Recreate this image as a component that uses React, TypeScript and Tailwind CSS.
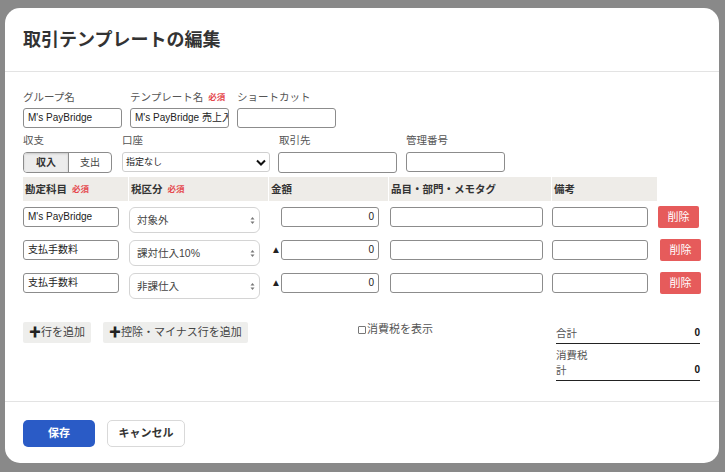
const rows = [
  { account: "M's PayBridge", tax: '対象外', minus: false },
  { account: '支払手数料', tax: '課対仕入10%', minus: true },
  { account: '支払手数料', tax: '非課仕入', minus: true },
]

function Required() {
  return <span className="ml-[5px] text-[8.5px] font-bold text-[#e5484d]">必須</span>
}

function Input({ value = '', className = '' }: { value?: string; className?: string }) {
  return (
    <div
      className={`flex items-center h-[20px] border border-[#8c8c8c] rounded-[3px] bg-white px-[4px] text-[10px] text-[#222] overflow-hidden whitespace-nowrap ${className}`}
    >
      {value}
    </div>
  )
}

function UpDown() {
  return (
    <svg width="5" height="9" viewBox="0 0 5 9" className="text-[#777]">
      <path d="M0.5 3.5 L2.5 1 L4.5 3.5 Z" fill="currentColor" />
      <path d="M0.5 5.5 L2.5 8 L4.5 5.5 Z" fill="currentColor" />
    </svg>
  )
}

export default function App() {
  return (
    <div className="w-[725px] h-[472px] bg-[#898989] pt-[8px] pl-[5px] font-['Liberation_Sans','Noto_Sans_CJK_JP',sans-serif] leading-none overflow-hidden">
      <div className="w-[714px] h-[455px] bg-white rounded-[15px] flex flex-col">
        <div className="h-[64px] border-b border-[#e3e3e3] flex items-center px-[18px]">
          <h1 className="text-[18px] font-bold text-[#333]">取引テンプレートの編集</h1>
        </div>

        <div className="flex-1 px-[18px] pt-[18px] text-[#555]">
          {/* row A */}
          <div className="flex text-[10.5px] h-[14px] items-center">
            <div className="w-[107px]">グループ名</div>
            <div className="w-[107px] flex items-center">
              テンプレート名<Required />
            </div>
            <div>ショートカット</div>
          </div>
          <div className="flex mt-[4px] gap-[8px]">
            <Input value="M's PayBridge" className="w-[99px]" />
            <Input value="M's PayBridge 売上入金" className="w-[99px]" />
            <Input className="w-[99px]" />
          </div>

          {/* row B */}
          <div className="flex text-[10.5px] h-[14px] items-center mt-[5px]">
            <div className="w-[99px]">収支</div>
            <div className="w-[157px]">口座</div>
            <div className="w-[127px]">取引先</div>
            <div>管理番号</div>
          </div>
          <div className="flex mt-[5px] items-start">
            <div className="flex w-[89px] h-[21px] border border-[#8c8c8c] rounded-[4px] overflow-hidden text-[10px]">
              <div className="w-[45px] flex items-center justify-center bg-[#ececec] font-bold text-[#333] border-r border-[#8c8c8c] shadow-[inset_0_1px_2px_rgba(0,0,0,0.15)]">
                収入
              </div>
              <div className="flex-1 flex items-center justify-center text-[#444]">支出</div>
            </div>
            <div className="ml-[10px] w-[148px] h-[20px] border border-[#cfcfcf] rounded-[3px] flex items-center justify-between px-[3px] text-[9px] text-[#222]">
              <span>指定なし</span>
              <svg width="10" height="7" viewBox="0 0 10 7">
                <path d="M1 1.5 L5 5.5 L9 1.5" stroke="#111" strokeWidth="2" fill="none" />
              </svg>
            </div>
            <Input className="ml-[8px] w-[119px] h-[21px]" />
            <Input className="ml-[9px] w-[99px]" />
          </div>

          {/* table header */}
          <div className="flex mt-[4px] h-[24px] text-[10.5px] font-bold text-[#333]">
            <div className="w-[106px] bg-[#eeece8] flex items-center px-[2px] border-r border-white">
              勘定科目<Required />
            </div>
            <div className="w-[140px] bg-[#eeece8] flex items-center px-[2px] border-r border-white">
              税区分<Required />
            </div>
            <div className="w-[120px] bg-[#eeece8] flex items-center px-[2px] border-r border-white">金額</div>
            <div className="w-[163px] bg-[#eeece8] flex items-center px-[2px] border-r border-white">
              品目・部門・メモタグ
            </div>
            <div className="w-[105px] bg-[#eeece8] flex items-center px-[2px]">備考</div>
          </div>

          {/* rows */}
          <div className="flex flex-col gap-[7px] mt-[6px]">
            {rows.map((r, i) => (
              <div key={i} className="flex items-start h-[26px]">
                <div className="w-[106px]">
                  <Input value={r.account} className="w-[96px]" />
                </div>
                <div className="w-[140px]">
                  <div className="w-[131px] h-[26px] border border-[#d4d4d4] rounded-[6px] flex items-center justify-between pl-[7px] pr-[4px] text-[10.5px] text-[#444]">
                    <span>{r.tax}</span>
                    <UpDown />
                  </div>
                </div>
                <div className="w-[120px] flex items-center">
                  <span className="w-[12px] pl-[2px] text-[10px] text-[#222]">{r.minus ? '▲' : ''}</span>
                  <Input value="0" className="w-[98px] justify-end" />
                </div>
                <div className="w-[163px] pl-[1px]">
                  <Input className="w-[153px]" />
                </div>
                <div className="w-[106px]">
                  <Input className="w-[96px]" />
                </div>
                <button className={`${i === 0 ? '' : 'ml-[2px]'} w-[41px] h-[22px] -mt-[1px] bg-[#e65b5b] rounded-[2px] text-white text-[11px]`}>
                  削除
                </button>
              </div>
            ))}
          </div>

          {/* bottom */}
          <div className="flex items-start mt-[23px]">
            <div className="flex gap-[12px] w-[335px]">
              <button className="h-[21px] px-[6px] bg-[#eeeeec] rounded-[2px] text-[11px] text-[#444] flex items-center">
                <span className="font-bold text-[#222] text-[12px]">✚</span>行を追加
              </button>
              <button className="h-[21px] px-[6px] bg-[#eeeeec] rounded-[2px] text-[11px] text-[#444] flex items-center">
                <span className="font-bold text-[#222] text-[12px]">✚</span>控除・マイナス行を追加
              </button>
            </div>
            <div className="w-[198px] flex items-center text-[11px] text-[#555] pt-[2px]">
              <span className="w-[8px] h-[8px] border border-[#777] rounded-[1px] mr-[1px]" />
              消費税を表示
            </div>
            <div className="w-[144px] text-[10.5px] text-[#555] pt-[4px]">
              <div className="flex justify-between items-center h-[14px]">
                <span>合計</span>
                <span className="font-bold text-[#111] text-[10px]">0</span>
              </div>
              <div className="border-b border-[#222] mt-[3px]" />
              <div className="h-[14px] flex items-center mt-[4px]">消費税</div>
              <div className="flex justify-between items-center h-[14px] mt-[1px]">
                <span>計</span>
                <span className="font-bold text-[#111] text-[10px]">0</span>
              </div>
              <div className="border-b border-[#222] mt-[3px]" />
            </div>
          </div>
        </div>

        <div className="h-[62px] border-t border-[#e3e3e3] flex items-start px-[18px] pt-[18px] gap-[12px]">
          <button className="w-[72px] h-[27px] bg-[#2a5bc6] rounded-[5px] text-white text-[11px] font-bold">
            保存
          </button>
          <button className="w-[78px] h-[27px] bg-white border border-[#d9d9d9] rounded-[5px] text-[#333] text-[11px] font-bold">
            キャンセル
          </button>
        </div>
      </div>
    </div>
  )
}
